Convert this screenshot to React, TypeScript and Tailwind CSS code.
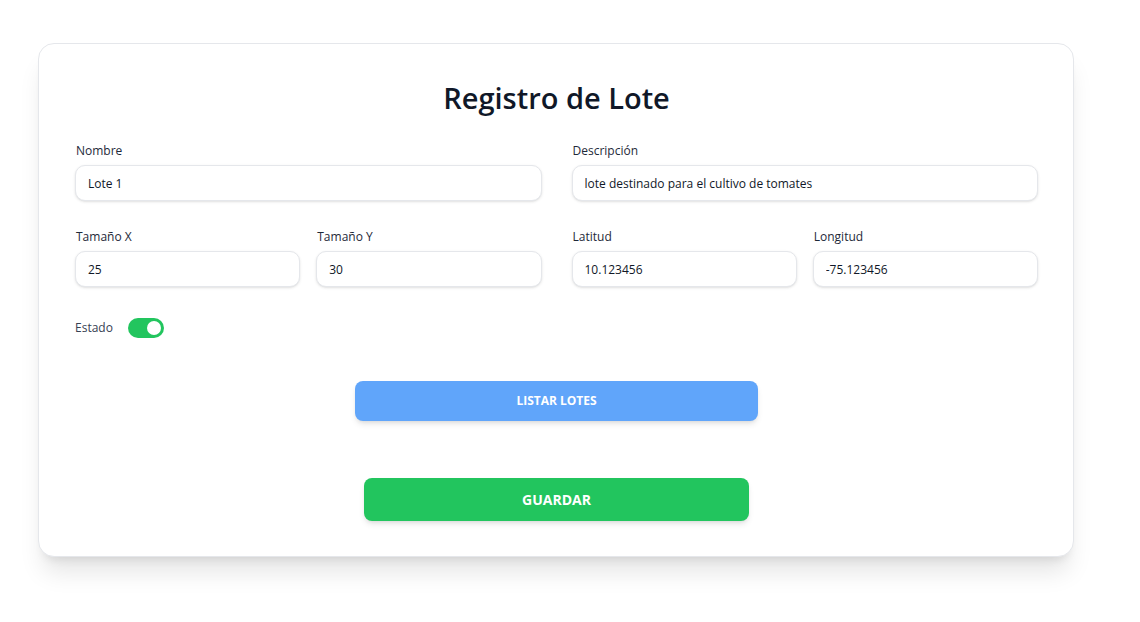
import React from "react";

type FieldProps = {
  label: string;
  value: string;
};

const Field = ({ label, value }: FieldProps) => {
  return (
    <div className="flex flex-col">
      <label className="text-[12px] leading-5 text-gray-800 pt-px mb-1 pl-px">{label}</label>
      <input
        className="h-9 w-full rounded-[10px] border border-gray-200 bg-white px-3 text-[12px] text-gray-900 shadow-sm outline-none"
        defaultValue={value}
      />
    </div>
  );
};

const App = () => {
  return (
    <div
      className="min-h-[622px] bg-white pt-[43px]"
      style={{ fontFamily: '"Open Sans", "Noto Sans", sans-serif' }}
    >
      <div className="ml-[38px] w-[1036px] rounded-2xl border border-gray-200 bg-white pl-[36px] pr-[35px] pt-9 pb-[35px] shadow-xl">
        <h1 className="text-center text-[29px] leading-9 font-semibold text-gray-900 mb-6">
          Registro de Lote
        </h1>

        <div className="grid grid-cols-2 gap-x-[30px] gap-y-[25px]">
          <Field label="Nombre" value="Lote 1" />
          <Field label="Descripción" value="lote destinado para el cultivo de tomates" />
          <div className="grid grid-cols-2 gap-4">
            <Field label="Tamaño X" value="25" />
            <Field label="Tamaño Y" value="30" />
          </div>
          <div className="grid grid-cols-2 gap-4">
            <Field label="Latitud" value="10.123456" />
            <Field label="Longitud" value="-75.123456" />
          </div>
        </div>

        <div className="mt-[31px] flex items-center gap-[15px]">
          <span className="text-[12px] text-gray-700">Estado</span>
          <button className="flex h-5 w-9 items-center justify-end rounded-full bg-[#22c55e] px-[3px]">
            <span className="block h-[14px] w-[14px] rounded-full bg-white" />
          </button>
        </div>

        <div className="mt-[43px] flex justify-center">
          <button className="h-10 w-[403px] rounded-lg bg-[#60a5fa] text-[12px] font-bold uppercase text-white shadow-md">
            Listar Lotes
          </button>
        </div>

        <div className="mt-[57px] flex justify-center">
          <button className="h-[43px] w-[385px] rounded-lg bg-[#22c55e] text-[14px] font-bold uppercase text-white shadow-md">
            Guardar
          </button>
        </div>
      </div>
    </div>
  );
};

export default App;
